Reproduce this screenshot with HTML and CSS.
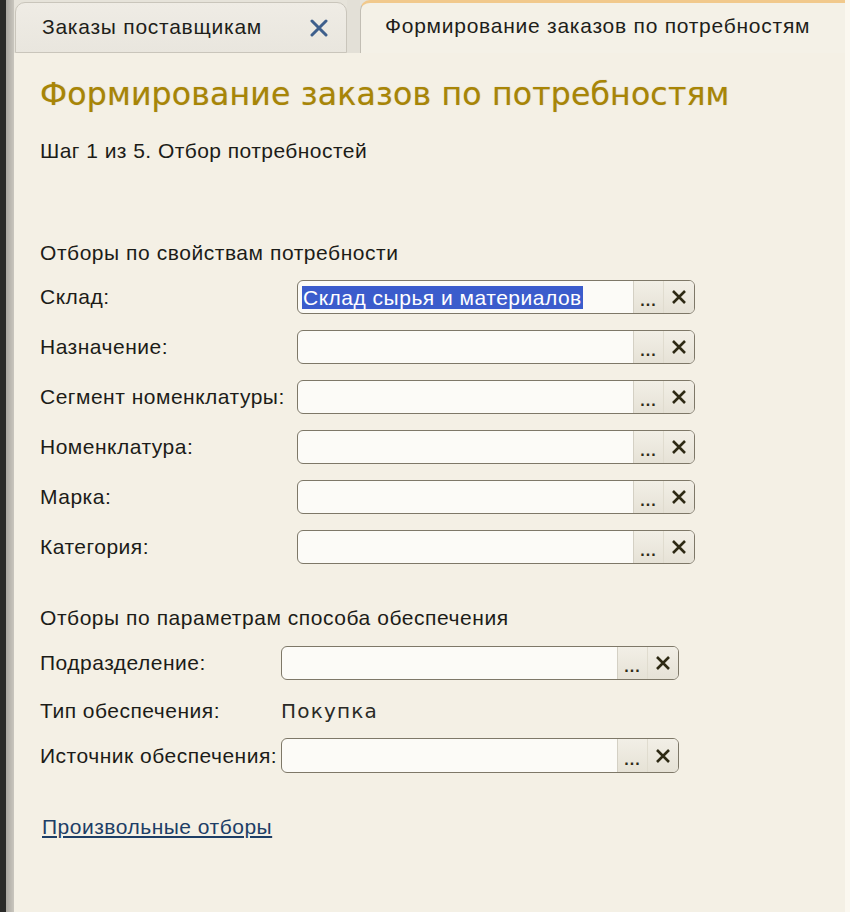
FILE: index.html
```html
<!DOCTYPE html>
<html lang="ru">
<head>
<meta charset="utf-8">
<title>Формирование заказов по потребностям</title>
<link rel="stylesheet" href="styles.css">
</head>
<body>
<div class="frame">
  <div class="edge"><div class="edge-dark"></div><div class="edge-gray"></div></div>
  <div class="main">
    <div class="tabbar">
      <div class="tab tab-inactive">
        <span class="tab-title">Заказы поставщикам</span>
        <svg class="tab-close" width="18" height="18" viewBox="0 0 18 18"><path d="M2 2 L16 16 M16 2 L2 16" stroke="#3e5f8c" stroke-width="3" stroke-linecap="round"/></svg>
      </div>
      <div class="tab-gap"></div>
      <div class="tab tab-active">
        <span class="tab-title">Формирование заказов по потребностям</span>
      </div>
    </div>
    <div class="content">
      <h1 class="heading">Формирование заказов по потребностям</h1>
      <div class="step">Шаг 1 из 5. Отбор потребностей</div>

      <div class="section-title first">Отборы по свойствам потребности</div>
      <div class="form form-a">
        <div class="row"><span class="label">Склад:</span>
          <div class="field"><div class="field-text"><span class="selected">Склад сырья и материалов</span></div><div class="btn btn-dots">...</div><div class="btn btn-clear"><svg width="16" height="16" viewBox="0 0 16 16"><path d="M2 2 L14 14 M14 2 L2 14" stroke="#2e2a14" stroke-width="2.6"/></svg></div></div>
        </div>
        <div class="row"><span class="label">Назначение:</span>
          <div class="field"><div class="field-text"></div><div class="btn btn-dots">...</div><div class="btn btn-clear"><svg width="16" height="16" viewBox="0 0 16 16"><path d="M2 2 L14 14 M14 2 L2 14" stroke="#2e2a14" stroke-width="2.6"/></svg></div></div>
        </div>
        <div class="row"><span class="label">Сегмент номенклатуры:</span>
          <div class="field"><div class="field-text"></div><div class="btn btn-dots">...</div><div class="btn btn-clear"><svg width="16" height="16" viewBox="0 0 16 16"><path d="M2 2 L14 14 M14 2 L2 14" stroke="#2e2a14" stroke-width="2.6"/></svg></div></div>
        </div>
        <div class="row"><span class="label">Номенклатура:</span>
          <div class="field"><div class="field-text"></div><div class="btn btn-dots">...</div><div class="btn btn-clear"><svg width="16" height="16" viewBox="0 0 16 16"><path d="M2 2 L14 14 M14 2 L2 14" stroke="#2e2a14" stroke-width="2.6"/></svg></div></div>
        </div>
        <div class="row"><span class="label">Марка:</span>
          <div class="field"><div class="field-text"></div><div class="btn btn-dots">...</div><div class="btn btn-clear"><svg width="16" height="16" viewBox="0 0 16 16"><path d="M2 2 L14 14 M14 2 L2 14" stroke="#2e2a14" stroke-width="2.6"/></svg></div></div>
        </div>
        <div class="row"><span class="label">Категория:</span>
          <div class="field"><div class="field-text"></div><div class="btn btn-dots">...</div><div class="btn btn-clear"><svg width="16" height="16" viewBox="0 0 16 16"><path d="M2 2 L14 14 M14 2 L2 14" stroke="#2e2a14" stroke-width="2.6"/></svg></div></div>
        </div>
      </div>

      <div class="section-title second">Отборы по параметрам способа обеспечения</div>
      <div class="form form-b">
        <div class="row row-b1"><span class="label">Подразделение:</span>
          <div class="field"><div class="field-text"></div><div class="btn btn-dots">...</div><div class="btn btn-clear"><svg width="16" height="16" viewBox="0 0 16 16"><path d="M2 2 L14 14 M14 2 L2 14" stroke="#2e2a14" stroke-width="2.6"/></svg></div></div>
        </div>
        <div class="row row-b2"><span class="label">Тип обеспечения:</span>
          <span class="value">Покупка</span>
        </div>
        <div class="row row-b3"><span class="label">Источник обеспечения:</span>
          <div class="field"><div class="field-text"></div><div class="btn btn-dots">...</div><div class="btn btn-clear"><svg width="16" height="16" viewBox="0 0 16 16"><path d="M2 2 L14 14 M14 2 L2 14" stroke="#2e2a14" stroke-width="2.6"/></svg></div></div>
        </div>
      </div>

      <a class="link" href="#">Произвольные отборы</a>
    </div>
  </div>
  <div class="right-edge"></div>
</div>
</body>
</html>
```
FILE: styles.css
```css
html, body {
  margin: 0;
  padding: 0;
  height: 100%;
}
body {
  background: #f4f0e5;
  font-family: "Liberation Sans", Arial, sans-serif;
  color: #1c1c18;
  overflow: hidden;
}
.frame {
  display: flex;
  height: 912px;
}
.edge {
  display: flex;
  flex: 0 0 14px;
}
.edge-dark {
  width: 6px;
  background: #2a2a28;
}
.edge-gray {
  width: 8px;
  background: linear-gradient(to right, #a9a69f, #c9c6be);
}
.main {
  flex: 1;
  display: flex;
  flex-direction: column;
  min-width: 0;
}
.right-edge {
  flex: 0 0 5px;
  background: #fbf8f0;
}
.tabbar {
  height: 53px;
  display: flex;
  align-items: flex-end;
  background: #e6e3da;
  flex: 0 0 53px;
}
.tab {
  display: flex;
  align-items: center;
  box-sizing: border-box;
}
.tab-inactive {
  width: 332px;
  height: 51px;
  margin-left: 1px;
  background: linear-gradient(#efece5, #e9e6de);
  border: 1px solid #c9c5bb;
  border-radius: 10px 10px 0 0;
  padding: 0 18px 2px 26px;
  justify-content: space-between;
}
.tab-gap {
  width: 13px;
  height: 53px;
  background: #e3e0d7;
}
.tab-active {
  flex: 1;
  height: 53px;
  background: #f4f1e7;
  border-top: 3px solid #f1c98c;
  border-left: 1px solid #c2beb4;
  border-radius: 10px 0 0 0;
  padding: 0 0 4px 24px;
}
.tab-title {
  font-size: 21px;
  letter-spacing: 0.75px;
  color: #1e1e1a;
  white-space: nowrap;
}
.tab-close {
  display: block;
  margin-top: 2px;
}
.content {
  flex: 1;
  padding-left: 26px;
  background: #f4f0e5;
}
.heading {
  margin: 21px 0 0 0;
  font-family: "DejaVu Sans", Verdana, sans-serif;
  font-weight: normal;
  font-size: 31.5px;
  line-height: 40px;
  color: #a88506;
  letter-spacing: 0.2px;
  text-shadow: 0 0 1px rgba(120, 90, 0, 0.4);
  white-space: nowrap;
}
.step {
  margin-top: 25px;
  font-size: 21px;
  letter-spacing: 0.45px;
  line-height: 24px;
}
.section-title {
  font-size: 21px;
  letter-spacing: 0.55px;
  line-height: 24px;
  white-space: nowrap;
}
.section-title.first {
  margin-top: 78px;
}
.section-title.second {
  margin-top: 34px;
}
.form-a {
  margin-top: 7px;
  display: grid;
  grid-template-columns: 257px 398px;
}
.form-b {
  margin-top: 16px;
  display: grid;
  grid-template-columns: 241px 398px;
}
.row {
  display: contents;
}
.label, .value {
  font-size: 21px;
  letter-spacing: 0.5px;
  display: flex;
  align-items: center;
  white-space: nowrap;
}
.form-a .label, .form-a .field {
  height: 34px;
  margin: 8px 0;
}
.row-b1 .label, .row-b1 .field {
  height: 34px;
  margin: 0 0 19px 0;
}
.row-b2 .label, .row-b2 .value {
  height: 24px;
}
.row-b3 .label, .row-b3 .field {
  height: 35px;
  margin-top: 15px;
}
.value {
  font-family: "DejaVu Sans", Verdana, sans-serif;
  font-size: 20px;
  letter-spacing: 1.2px;
  color: #2a2a26;
}
.field {
  box-sizing: border-box;
  display: flex;
  border: 1px solid #7e7868;
  border-radius: 6px;
  background: #fcfbf7;
  overflow: hidden;
}
.field-text {
  flex: 1;
  display: flex;
  align-items: center;
  padding-left: 4px;
}
.selected {
  background: #3b5ccc;
  color: #ffffff;
  font-size: 21px;
  letter-spacing: 0.5px;
  line-height: 23px;
  padding: 0 1px;
  white-space: nowrap;
}
.btn {
  width: 30px;
  display: flex;
  align-items: center;
  justify-content: center;
  background: linear-gradient(#f2efe6, #e6e2d6);
  color: #2e2a14;
}
.btn-dots {
  border-left: 1px solid #d4d0c4;
  align-items: flex-end;
  font-weight: bold;
  font-size: 16px;
  line-height: 20px;
  letter-spacing: 1px;
  padding-bottom: 2px;
  box-sizing: border-box;
}
.btn-clear {
  border-left: 1px solid #e0dccf;
}
.link {
  display: inline-block;
  margin-top: 42px;
  margin-left: 2px;
  font-size: 21px;
  letter-spacing: 0.5px;
  line-height: 24px;
  color: #1d3e66;
  text-decoration: underline;
}
```
